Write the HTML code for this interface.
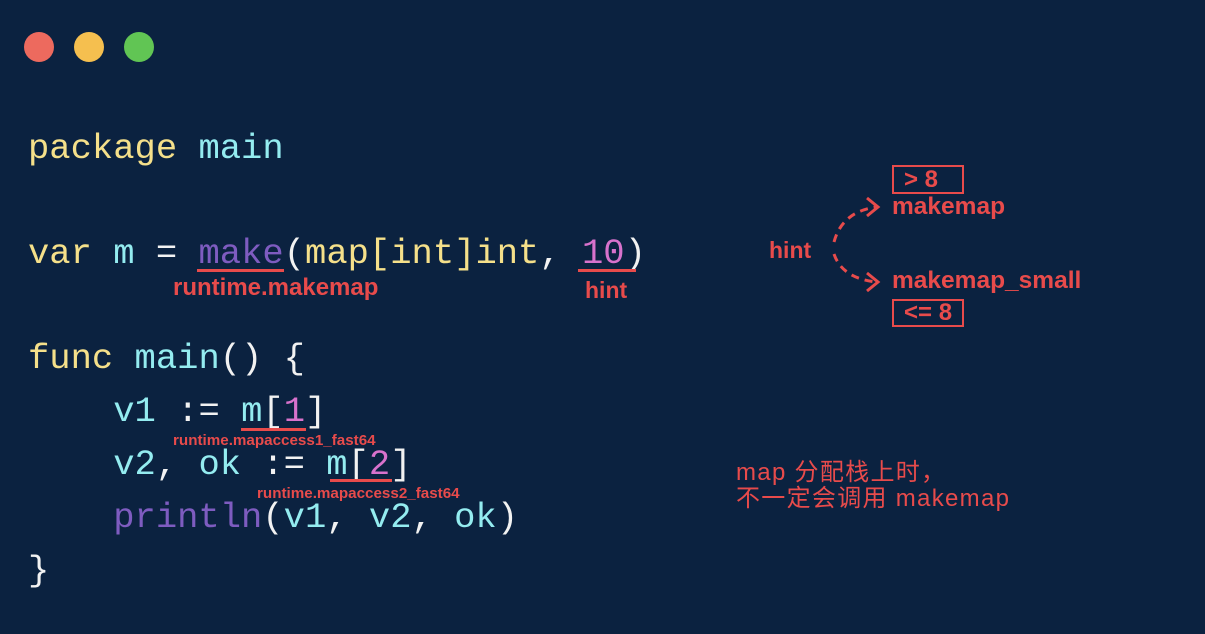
<!DOCTYPE html>
<html><head><meta charset="utf-8"><style>
body{margin:0;width:1205px;height:634px;background:#0b2240;position:relative;overflow:hidden}
.d{position:absolute;border-radius:50%;width:30px;height:30px;top:32px}
.c{position:absolute;left:28px;font-family:"Liberation Mono",monospace;font-size:35.5px;line-height:1;white-space:pre;color:#f5e08a}
.y{color:#f5e08a}.cy{color:#94ecf0}.p{color:#7e5cc0}.k{color:#d872cc}.w{color:#f2f2f2}
.r{position:absolute;font-family:"Liberation Sans",sans-serif;font-weight:bold;color:#e84b4b;white-space:nowrap}
.u{position:absolute;height:3px;background:#e84b4b}
.b{position:absolute;border:2px solid #e84b4b;box-sizing:border-box}
</style></head><body>
<div class="d" style="left:24px;background:#ed6a5e"></div>
<div class="d" style="left:74px;background:#f5bf4f"></div>
<div class="d" style="left:124px;background:#61c554"></div>

<div class="c" style="top:131px"><span class="y">package</span> <span class="cy">main</span></div>
<div class="c" style="top:236px"><span class="y">var</span> <span class="cy">m</span> <span class="w">=</span> <span class="p">make</span><span class="w">(</span>map[int]int<span class="w">,</span> <span class="k">10</span><span class="w">)</span></div>
<div class="c" style="top:341px"><span class="y">func</span> <span class="cy">main</span><span class="w">() {</span></div>
<div class="c" style="top:394px">    <span class="cy">v1</span> <span class="w">:=</span> <span class="cy">m</span><span class="w">[</span><span class="k">1</span><span class="w">]</span></div>
<div class="c" style="top:447px">    <span class="cy">v2</span><span class="w">,</span> <span class="cy">ok</span> <span class="w">:=</span> <span class="cy">m</span><span class="w">[</span><span class="k">2</span><span class="w">]</span></div>
<div class="c" style="top:500px">    <span class="p">println</span><span class="w">(</span><span class="cy">v1</span><span class="w">,</span> <span class="cy">v2</span><span class="w">,</span> <span class="cy">ok</span><span class="w">)</span></div>
<div class="c" style="top:553px"><span class="w">}</span></div>

<div class="u" style="left:197px;top:269px;width:87px"></div>
<div class="r" style="left:173px;top:274px;font-size:24px">runtime.makemap</div>
<div class="u" style="left:578px;top:269px;width:58px"></div>
<div class="r" style="left:585px;top:277px;font-size:23px">hint</div>
<div class="u" style="left:241px;top:428px;width:65px"></div>
<div class="r" style="left:173px;top:432px;font-size:15.2px">runtime.mapaccess1_fast64</div>
<div class="u" style="left:330px;top:479px;width:62px"></div>
<div class="r" style="left:257px;top:485px;font-size:15.2px">runtime.mapaccess2_fast64</div>

<div class="r" style="left:769px;top:237px;font-size:23px">hint</div>
<div class="b" style="left:892px;top:165px;width:72px;height:29px"></div>
<div class="r" style="left:904px;top:166px;font-size:24px">&gt; 8</div>
<div class="r" style="left:892px;top:193px;font-size:24.5px">makemap</div>
<div class="r" style="left:892px;top:267px;font-size:24.5px">makemap_small</div>
<div class="b" style="left:892px;top:299px;width:72px;height:28px"></div>
<div class="r" style="left:904px;top:299px;font-size:24px">&lt;= 8</div>
<svg style="position:absolute;left:0;top:0" width="1205" height="634">
<g fill="none" stroke="#e84b4b" stroke-width="3">
<path d="M834 242 Q842 212 876 207" stroke-dasharray="8 6"/>
<path d="M867 198 L878 207 L867 216"/>
<path d="M834 254 Q842 278 876 282" stroke-dasharray="8 6"/>
<path d="M867 273 L878 282 L867 291"/>
</g></svg>
<div class="r" style="left:736px;top:460px;font-size:24px;font-weight:normal;line-height:26px;letter-spacing:1.3px;font-family:'Liberation Sans','Noto Sans CJK SC',sans-serif">map 分配栈上时，<br>不一定会调用 makemap</div>
</body></html>
